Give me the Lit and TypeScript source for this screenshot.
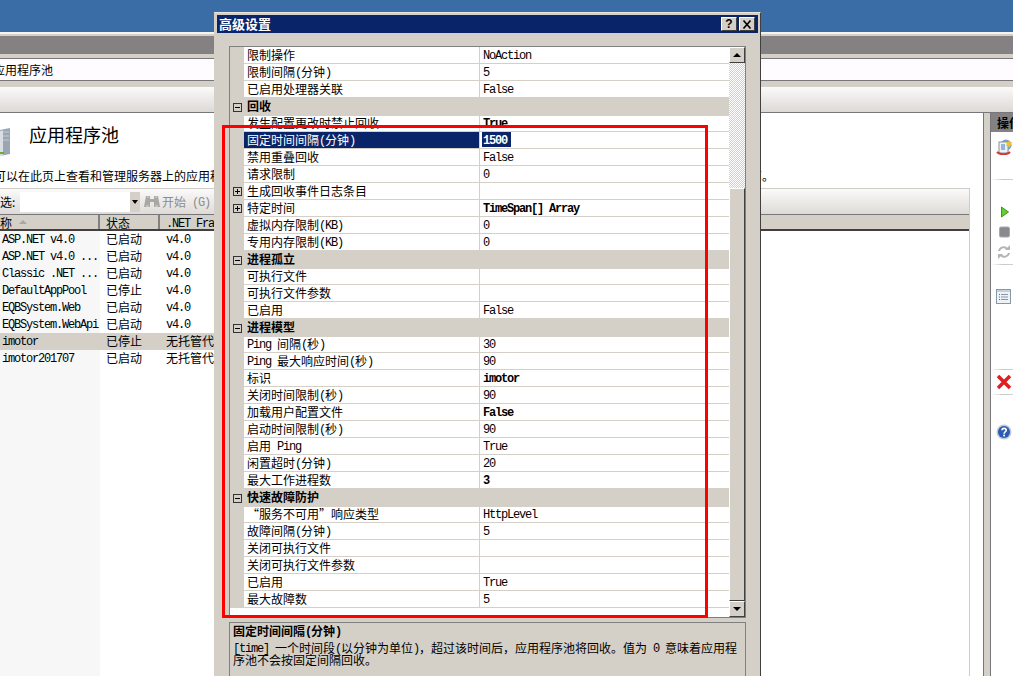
import { LitElement, html, css, svg } from "lit";
import { customElement } from "lit/decorators.js";

type Row = { n: string; v?: string; b?: boolean; k?: "plus"; h?: boolean; sel?: boolean };

const ROWS: Row[] = [
  { n: "限制操作", v: "NoAction" },
  { n: "限制间隔(分钟)", v: "5" },
  { n: "已启用处理器关联", v: "False" },
  { n: "回收", h: true },
  { n: "发生配置更改时禁止回收", v: "True", b: true },
  { n: "固定时间间隔(分钟)", v: "1500", sel: true, b: true },
  { n: "禁用重叠回收", v: "False" },
  { n: "请求限制", v: "0" },
  { n: "生成回收事件日志条目", k: "plus" },
  { n: "特定时间", v: "TimeSpan[] Array", b: true, k: "plus" },
  { n: "虚拟内存限制(KB)", v: "0" },
  { n: "专用内存限制(KB)", v: "0" },
  { n: "进程孤立", h: true },
  { n: "可执行文件" },
  { n: "可执行文件参数" },
  { n: "已启用", v: "False" },
  { n: "进程模型", h: true },
  { n: "Ping 间隔(秒)", v: "30" },
  { n: "Ping 最大响应时间(秒)", v: "90" },
  { n: "标识", v: "imotor", b: true },
  { n: "关闭时间限制(秒)", v: "90" },
  { n: "加载用户配置文件", v: "False", b: true },
  { n: "启动时间限制(秒)", v: "90" },
  { n: "启用 Ping", v: "True" },
  { n: "闲置超时(分钟)", v: "20" },
  { n: "最大工作进程数", v: "3", b: true },
  { n: "快速故障防护", h: true },
  { n: "“服务不可用”响应类型", v: "HttpLevel" },
  { n: "故障间隔(分钟)", v: "5" },
  { n: "关闭可执行文件" },
  { n: "关闭可执行文件参数" },
  { n: "已启用", v: "True" },
  { n: "最大故障数", v: "5" },
];

const POOLS = [
  ["ASP.NET v4.0", "已启动", "v4.0"],
  ["ASP.NET v4.0 ...", "已启动", "v4.0"],
  ["Classic .NET ...", "已启动", "v4.0"],
  ["DefaultAppPool", "已停止", "v4.0"],
  ["EQBSystem.Web", "已启动", "v4.0"],
  ["EQBSystem.WebApi", "已启动", "v4.0"],
  ["imotor", "已停止", "无托管代码"],
  ["imotor201707", "已启动", "无托管代码"],
];

const HELP = "[time] 一个时间段(以分钟为单位)\uFF0C超过该时间后\uFF0C应用程序池将回收。值为 0 意味着应用程序池不会按固定间隔回收。";
const DESC = "可以在此页上查看和管理服务器上的应用程序池列表。应用程序池与工作进程相关联\uFF0C包含一个或多个应用程序\uFF0C并提供不同应用程序之间的隔离。";

/* Splits a string into half-width (mono) and full-width (CJK) runs. */
const txt = (s: string) =>
  (s.match(/[\x00-\x7f]+|[^\x00-\x7f]+/g) || []).map((r) =>
    /^[\x00-\x7f]/.test(r) ? html`<span class="l">${r}</span>` : html`<span class="c">${r}</span>`
  );

const box = (plus: boolean) => html`<svg class="exp" width="9" height="9" viewBox="0 0 9 9">
  <rect x=".5" y=".5" width="8" height="8" fill="none" stroke="#333"/>
  <path d="M2 4.5h5" stroke="#000"/>
  ${plus ? svg`<path d="M4.5 2v5" stroke="#000"/>` : ""}
</svg>`;

const ICONS = [
  { m: 7, i: html`<svg width="17" height="16" viewBox="0 0 17 16"><circle cx="10" cy="6" r="5.5" fill="#6ea8d8"/><rect x="3" y="3" width="9" height="11" fill="#eef1f5" stroke="#8a93a0"/><path d="M5 6h4M5 8h4M5 10h4" stroke="#3a78c0"/><path d="M1 13c3 3 10 3 13 0" fill="none" stroke="#d03a30" stroke-width="2"/><path d="M13 1l1 2.500 2.500-.5-1.500 2 1.500 2-2.500-.5-1 2.500-1-2.500-2.500.5 1.500-2-1.500-2 2.500.5z" fill="#f8c020"/></svg>` },
  { m: 24, sep: true },
  { m: 24, i: html`<svg width="16" height="16" viewBox="0 0 16 16"><path d="M5.500 3l7 5-7 5z" fill="#66cc33" stroke="#3a9a20"/></svg>` },
  { m: 4, i: html`<svg width="16" height="16" viewBox="0 0 16 16"><rect x="3.500" y="3" width="10" height="10" rx="1.500" fill="#8a8a8e" stroke="#a8a8a8"/></svg>` },
  { m: 4, i: html`<svg width="16" height="16" viewBox="0 0 16 16"><path d="M3 7c1-4 6-5 8-2M13 9c-1 4-6 5-8 2" fill="none" stroke="#b4b4b4" stroke-width="2"/><path d="M9 6h5V1zM7 10H2v5z" fill="#b4b4b4"/></svg>` },
  { m: 4, sep: true },
  { m: 24, i: html`<svg width="16" height="16" viewBox="0 0 16 16"><rect x=".5" y=".5" width="14" height="14" fill="#eef2f6" stroke="#8a97a6"/><rect x="1" y="1" width="13" height="2" fill="#c8d0da"/><path d="M3 5.500h1M3 8h1M3 10.500h1" stroke="#3a78c0"/><path d="M5 5.500h7M5 8h7M5 10.500h7" stroke="#8a97a6"/><path d="M6 14.500h3" stroke="#30b0e0"/></svg>` },
  { m: 64, sep: true },
  { m: 4, i: html`<svg width="16" height="16" viewBox="0 0 16 16"><path d="M2 2l12 12M14 2L2 14" stroke="#e02020" stroke-width="3.500"/></svg>` },
  { m: 4, sep: true },
  { m: 29, i: html`<svg width="16" height="16" viewBox="0 0 16 16"><circle cx="8" cy="8" r="7.500" fill="#c4c8d2"/><circle cx="8" cy="8" r="6" fill="#2a5cb4"/><path d="M6 6.300c0-2.600 4.200-2.600 4.200 0 0 1.700-2.100 1.600-2.100 3.400" fill="none" stroke="#fff" stroke-width="1.600"/><rect x="7.200" y="10.600" width="1.800" height="1.800" fill="#fff"/></svg>` },
];

@customElement("app-root")
export class AppRoot extends LitElement {
  static styles = css`
    :host { display: block; width: 1013px; height: 676px; }
    * { box-sizing: border-box; }
    .root {
      position: relative; width: 1013px; height: 676px; overflow: hidden;
      background: #d4d0c8; color: #000;
      font: 12px/16px "Noto Sans CJK SC", "Liberation Sans", sans-serif;
      display: flex; flex-direction: column;
    }
    .l { font-family: "Liberation Mono", "DejaVu Sans Mono", monospace; font-size: 12px; letter-spacing: -1.2px; white-space: pre; line-height: 0; vertical-align: 1px; }
    .c { font-family: "Noto Sans CJK SC", sans-serif; }
    .desk { height: 32px; background: #3a6ca6; flex: none; }
    .hair { height: 4px; flex: none; background: linear-gradient(#f4f3f0 0 2px, #d4d0c8 2px); }
    .nav { height: 18px; background: #838181; flex: none; }
    .gap4 { height: 4px; background: #d4d0c8; flex: none; }
    .addr {
      height: 23px; flex: none; background: #fefcfe; border-top: 1px solid #77767a; border-bottom: 1px solid #77767a;
      line-height: 21px; font-size: 12px; overflow: hidden; white-space: nowrap;
    }
    .addr span { margin-left: -7px; display: inline-block; }
    .gap6 { height: 6px; background: #d4d0c8; flex: none; }
    .band { height: 26px; flex: none; background: linear-gradient(#fbfafa, #dcd9d5); border-bottom: 1px solid #77767a; }
    .main { flex: 1; display: flex; min-height: 0; }
    .content { width: 984px; flex: none; background: #fff; border-right: 1px solid #77767a; padding-right: 13px; overflow: hidden; }
    .head { height: 47px; display: flex; align-items: flex-start; padding-top: 14px; gap: 19px; margin-left: 0; }
    .head svg { flex: none; }
    .head h1 { margin: 0; font-weight: 400; font-size: 18px; line-height: 17px; margin-top: -1px; }
    .desc { height: 28px; margin-left: -6px; white-space: nowrap; line-height: 16px; padding-top: 8px; }
    .pane { border-top: 1px solid #d0cdc8; border-right: 1px solid #d0cdc8; height: 488px; display: flex; flex-direction: column; }
    .filter { height: 26px; flex: none; background: linear-gradient(#fbfafa, #dedbd7); border-bottom: 1px solid #77767a; display: flex; align-items: center; white-space: nowrap; }
    .filter .lab { width: 20px; flex: none; line-height: 16px; }
    .input { width: 110px; height: 20px; background: #fff; flex: none; }
    .drop { width: 10px; height: 20px; flex: none; background: #d4d0c8; display: flex; align-items: center; justify-content: center; }
    .drop i { border: 3px solid transparent; border-top: 4px solid #000; border-bottom: 0; }
    .filter svg { margin-left: 4px; flex: none; }
    .start { color: #8e8c88; margin-left: 2px; }
    .thead { height: 16px; flex: none; background: #d4d0c8; border-bottom: 2px solid #404040; display: grid; grid-template-columns: 100px 60px 1fr; line-height: 15px; }
    .thead > div { padding-left: 6px; border-right: 2px solid #808080; white-space: nowrap; overflow: hidden; }
    .thead > div:first-child { padding-left: 0; display: flex; align-items: center; }
    .thead > div:last-child { border-right: 0; }
    .tri { border: 4px solid transparent; border-bottom: 4px solid #a8a8a8; border-top: 0; margin-left: 7px; }
    .tbody { flex: 1; background: linear-gradient(90deg, #f7f7f7 100px, #fff 100px); }
    .tr { height: 17px; width: 300px; display: grid; grid-template-columns: 100px 60px 1fr; line-height: 16px; white-space: nowrap; }
    .tr.on { background: #d4d0c8; }
    .tr > div { padding-left: 6px; overflow: hidden; }
    .tr > div:first-child { padding-left: 2px; }
    .side { flex: 1; margin-left: 6px; background: #fff; border-left: 1px solid #77767a; display: flex; flex-direction: column; }
    .sideh { height: 19px; flex: none; background: #838181; font-weight: 700; line-height: 19px; padding-left: 6px; white-space: nowrap; overflow: hidden; font-size: 12px; }
    .ic { height: 16px; padding-left: 5px; flex: none; }
    .ic svg { display: block; }
    .sp { height: 1px; flex: none; background: linear-gradient(90deg, #fff, #c8c8c8 40%, #d8d8d8); }

    .dlg {
      position: absolute; left: 214px; top: 12px; width: 547px; height: 680px;
      background: #d4d0c8; padding: 2px;
      border: 1px solid; border-color: #e8e6e2 #404040 #404040 #d4d0c8;
      display: flex; flex-direction: column;
    }
    .title {
      height: 18px; flex: none; background: #0a246a; color: #fff; font-weight: 700; font-size: 13px; line-height: 18px;
      padding: 0 3px 0 2px; display: flex; align-items: center; justify-content: space-between;
    }
    .btns { display: flex; gap: 2px; }
    .tb {
      width: 16px; height: 14px; background: #d4d0c8; color: #000; display: flex; align-items: center; justify-content: center;
      border: 1px solid; border-color: #fff #404040 #404040 #fff; font: 700 12px/12px "Liberation Sans", sans-serif;
    }
    .dbody { flex: 1; padding: 13px 12px 0; display: flex; flex-direction: column; min-height: 0; }
    .grid { height: 572px; flex: none; border: 1px solid #808080; display: flex; background: #fff; }
    .rows { flex: 1; min-width: 0; }
    .row { height: 17px; display: grid; grid-template-columns: 14px 236px 1fr; border-bottom: 1px solid #d4d0c8; line-height: 16px; white-space: nowrap; }
    .row .gut { background: #d4d0c8; display: flex; align-items: center; padding-left: 3px; }
    .row .nm { padding-left: 3px; border-right: 1px solid #d4d0c8; overflow: hidden; }
    .row .val { padding-left: 3px; overflow: hidden; }
    .row.hd { background: #d4d0c8; font-weight: 700; height: 18px; margin-bottom: -1px; border-bottom: 0; line-height: 16px; }
    .row.hd .nm { border: 0; }
    .row.sel .nm { background: #0a246a; color: #fff; }
    .row.sel .mark { background: #0a246a; color: #fff; display: inline-block; line-height: 15px; height: 15px; padding: 0 4px 0 1px; margin-left: -1px; }
    .exp { display: block; }
    .b .l { font-weight: 700; }
    .sb { width: 16px; flex: none; display: flex; flex-direction: column; background: repeating-conic-gradient(#d4d0c8 0 25%, #fff 0 50%) 0 0 / 2px 2px; }
    .sbtn {
      height: 16px; flex: none; background: #d4d0c8; border: 1px solid; border-color: #fff #404040 #404040 #fff;
      display: flex; align-items: center; justify-content: center;
    }
    .up { border: 4px solid transparent; border-bottom: 4px solid #000; border-top: 0; }
    .dn { border: 4px solid transparent; border-top: 4px solid #000; border-bottom: 0; }
    .track { height: 125px; flex: none; }
    .thumb { flex: 1; background: #d4d0c8; border: 1px solid; border-color: #fff #404040 #404040 #fff; }
    .help { margin-top: 4px; height: 80px; flex: none; border: 1px solid #808080; padding: 0 3px; line-height: 12px; }
    .help .ht { font-weight: 700; line-height: 16px; margin-bottom: 3px; }
    .help .ht .l { font-weight: 700; }
    .red { position: absolute; left: 222px; top: 125px; width: 486px; height: 493px; border: 3px solid #fe0000; pointer-events: none; }
  `;

  private renderRow(r: Row) {
    if (r.h)
      return html`<div class="row hd"><div class="gut">${box(false)}</div><div class="nm">${txt(r.n)}</div><div class="val"></div></div>`;
    const val = r.v ? txt(r.v) : "";
    return html`<div class="row ${r.sel ? "sel" : ""}">
      <div class="gut">${r.k ? box(true) : ""}</div>
      <div class="nm">${txt(r.n)}</div>
      <div class="val ${r.b ? "b" : ""}">${r.sel ? html`<span class="mark">${val}</span>` : val}</div>
    </div>`;
  }

  render() {
    return html`<div class="root">
      <div class="desk"></div>
      <div class="hair"></div>
      <div class="nav"></div>
      <div class="gap4"></div>
      <div class="addr"><span>应用程序池</span></div>
      <div class="gap6"></div>
      <div class="band"></div>
      <div class="main">
        <div class="content">
          <div class="head">
            <svg width="10" height="30" viewBox="0 0 10 30">
              <path d="M0 3l10-2v26l-10 2z" fill="#9aa6b2"/>
              <path d="M0 4l3-.6v25l-3 .6z" fill="#d8dee4"/>
              <path d="M3 5h6M3 9h6M3 13h6" stroke="#c4ccd4"/>
              <path d="M0 26h4" stroke="#66b030" stroke-width="2"/>
            </svg>
            <h1>应用程序池</h1>
          </div>
          <div class="desc">${DESC}</div>
          <div class="pane">
            <div class="filter">
              <span class="lab">选:</span>
              <div class="input"></div>
              <div class="drop"><i></i></div>
              <svg width="16" height="16" viewBox="0 0 16 16">
                <path d="M2 2h4v3h4V2h4l2 11h-6V8H6v5H0z" fill="#a8a8a4"/>
                <path d="M3 3h2M11 3h2M2 12h3M11 12h3" stroke="#d8d8d4"/>
              </svg>
              <span class="start">${txt("开始 (G)")}</span>
            </div>
            <div class="thead">
              <div><span class="c">称</span><i class="tri"></i></div>
              <div>状态</div>
              <div>${txt(".NET Framework 版本")}</div>
            </div>
            <div class="tbody">
              ${POOLS.map(
                (p) => html`<div class="tr ${p[0] === "imotor" ? "on" : ""}">
                  <div>${txt(p[0])}</div><div>${txt(p[1])}</div><div>${txt(p[2])}</div>
                </div>`
              )}
            </div>
          </div>
        </div>
        <div class="side">
          <div class="sideh">操作</div>
          ${ICONS.map((it) =>
            it.sep
              ? html`<div class="sp" style="margin-top:${it.m}px"></div>`
              : html`<div class="ic" style="margin-top:${it.m}px">${it.i}</div>`
          )}
        </div>
      </div>

      <div class="dlg">
        <div class="title">
          <span>高级设置</span>
          <div class="btns">
            <div class="tb">?</div>
            <div class="tb"><svg width="10" height="9" viewBox="0 0 10 9"><path d="M1.500 .5l7 8M8.500 .5l-7 8" stroke="#000" stroke-width="1.600"/></svg></div>
          </div>
        </div>
        <div class="dbody">
          <div class="grid">
            <div class="rows">${ROWS.map((r) => this.renderRow(r))}</div>
            <div class="sb">
              <div class="sbtn"><i class="up"></i></div>
              <div class="track"></div>
              <div class="thumb"></div>
              <div class="sbtn"><i class="dn"></i></div>
            </div>
          </div>
          <div class="help">
            <div class="ht">${txt("固定时间间隔(分钟)")}</div>
            <div>${txt(HELP)}</div>
          </div>
        </div>
      </div>
      <div class="red"></div>
    </div>`;
  }
}
